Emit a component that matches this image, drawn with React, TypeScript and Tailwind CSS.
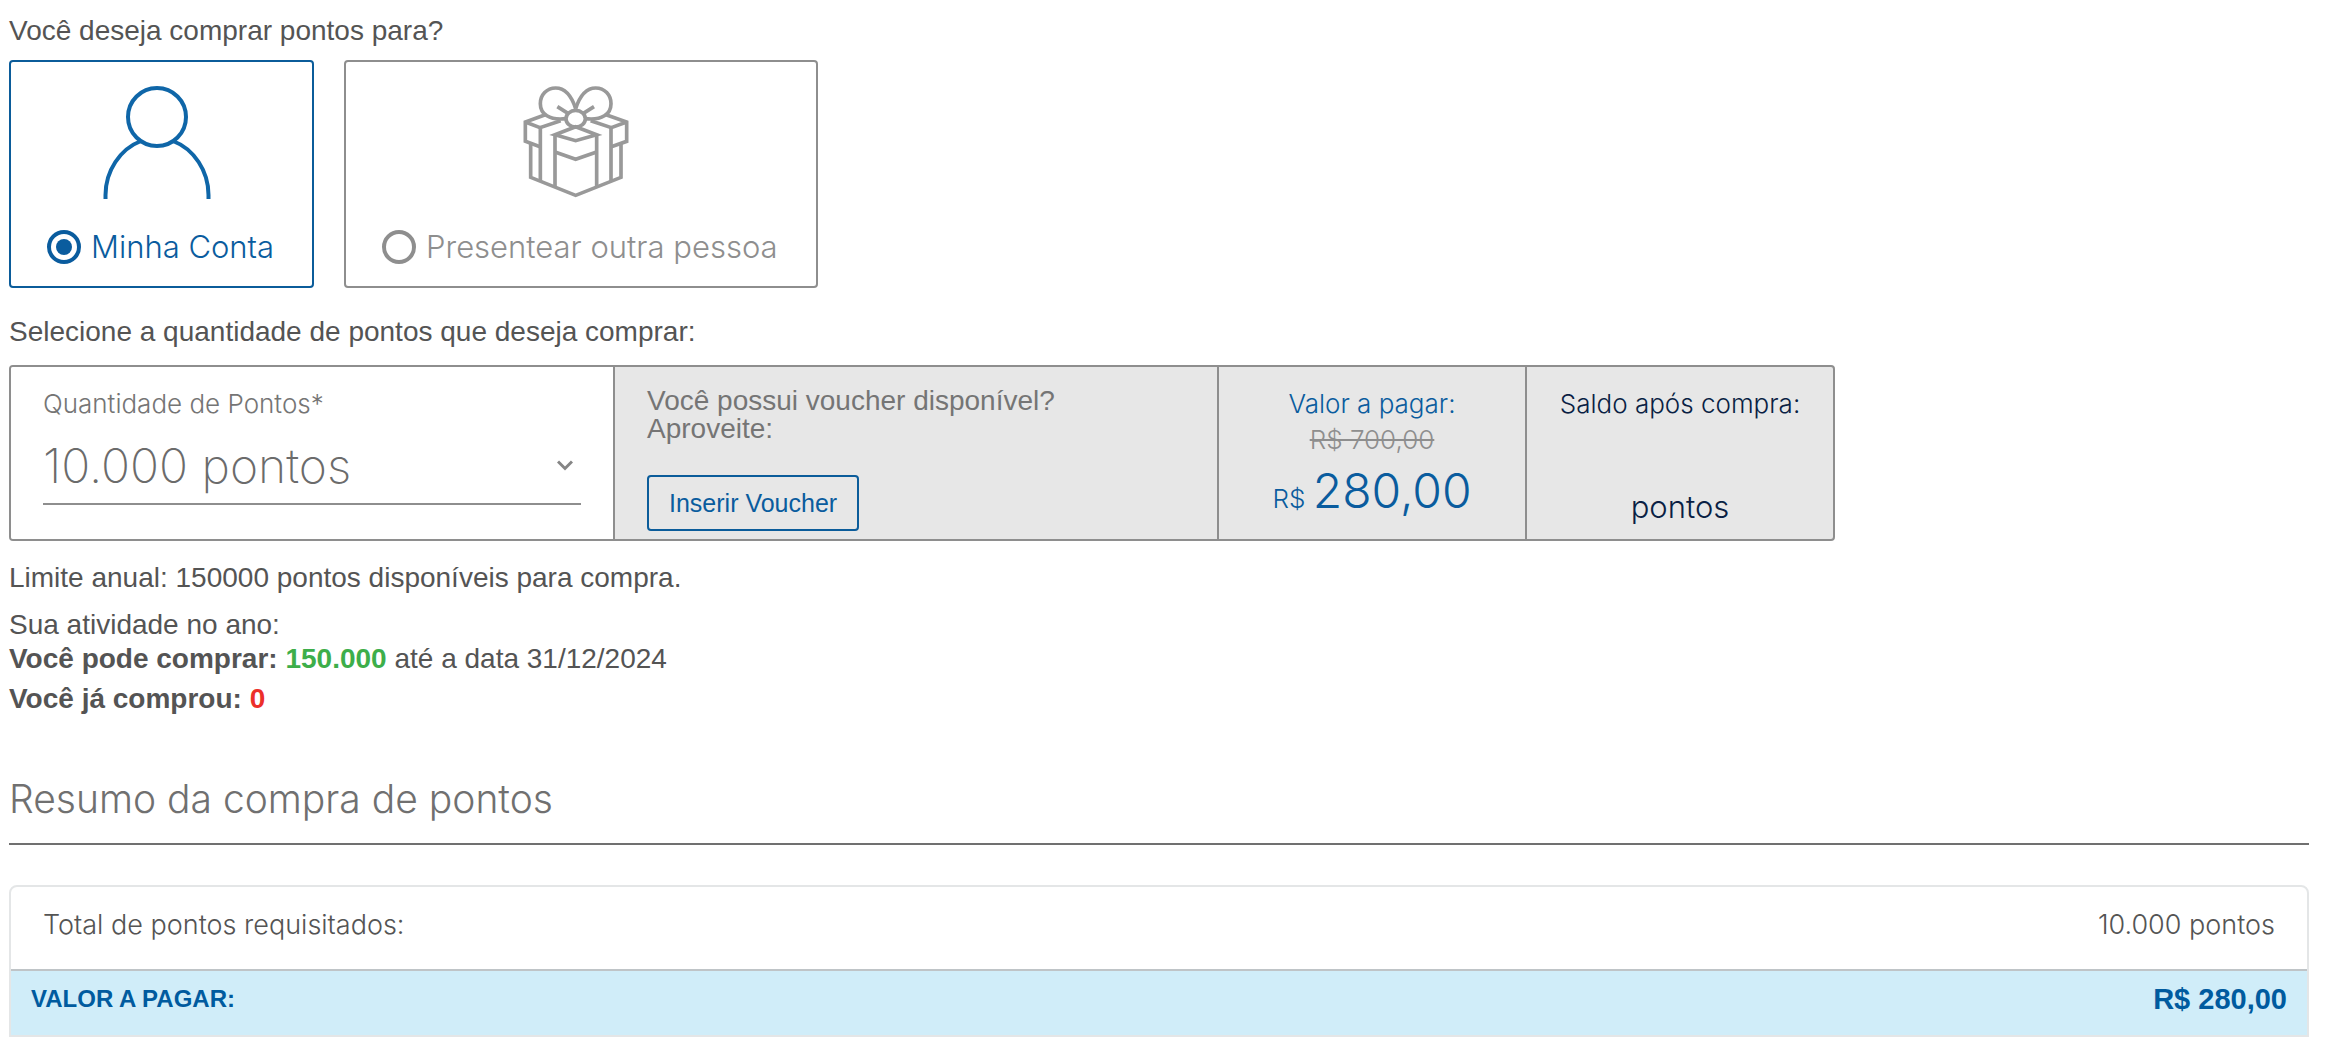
import React, { useState } from 'react';

type Recipient = 'self' | 'gift';

const PersonIcon = () => (
  <svg className="mr-2" width="108" height="114" viewBox="0 0 108 114" fill="none" stroke="#0f66a8" strokeWidth="4" aria-hidden="true">
    <circle cx="54" cy="31" r="29" />
    <path d="M2.500 113V109C2.500 85 17 63 38 55M105.500 113V109C105.500 85 91 63 70 55" />
  </svg>
);

const GiftIcon = () => (
  <svg className="mr-2" width="106" height="114" viewBox="0 0 316 342" fill="none" stroke="#999999" strokeWidth="11" aria-hidden="true">
    {/* Bow */}
    <path d="M157 68C144 28 124 6 97 6C70 6 51 27 51 53C51 84 78 104 128 98" />
    <path d="M157 68C170 28 190 6 217 6C244 6 263 27 263 53C263 84 236 104 186 98" />
    <path d="M102 62L134 82M212 62L180 82" />
    <ellipse cx="157" cy="98" rx="29" ry="25" />
    {/* Lid */}
    <path d="M66 86L6 108V166L50 182M6 108L50 125L112 104" />
    <path d="M248 86L310 108V166L264 182M310 108L264 125L202 104" />
    <path d="M95 146L157 122L220 146L157 164Z" />
    <path d="M95 198L157 220L220 198" />
    {/* Body */}
    <path d="M22 172V274L157 328L293 274V172" />
    <path d="M51 125V285M95 146V302M220 146V302M263 125V285" />
  </svg>
);

interface RecipientCardProps {
  label: string;
  checked: boolean;
  onSelect: () => void;
  icon: React.ReactNode;
}

const RecipientCard: React.FC<RecipientCardProps> = ({ label, checked, onSelect, icon }) => (
  <label
    className={`flex flex-col items-center gap-[27px] rounded border-2 pt-6 pr-[38px] pb-[19px] pl-9 cursor-pointer ${
      checked ? 'border-[#0b5c9a] text-[#0a5c9e]' : 'border-[#8e8e8e] text-[#8e8e8e]'
    }`}
  >
    {icon}
    <span className="flex items-center gap-2.5">
      <input
        type="radio"
        name="recipient"
        checked={checked}
        onChange={onSelect}
        className="size-[34px] shrink-0 appearance-none rounded-full border-4 border-current bg-white p-[5px] checked:bg-current checked:bg-clip-content"
      />
      <span className="font-['Inter',sans-serif] text-[31px] leading-10 font-light">{label}</span>
    </span>
  </label>
);

const amounts = ['10.000', '20.000', '30.000', '50.000'];

export default function App() {
  const [recipient, setRecipient] = useState<Recipient>('self');
  const [amount, setAmount] = useState(amounts[0]);

  return (
    <main className="bg-white pt-[11px] pr-[23px] pb-6 pl-[9px] font-['Liberation_Sans',Arial,sans-serif] text-[28px] leading-10 text-[#545454]">
      <fieldset>
        <legend>Você deseja comprar pontos para?</legend>
        <div className="mt-[9px] flex flex-wrap gap-[30px]">
          <RecipientCard
            label="Minha Conta"
            checked={recipient === 'self'}
            onSelect={() => setRecipient('self')}
            icon={<PersonIcon />}
          />
          <RecipientCard
            label="Presentear outra pessoa"
            checked={recipient === 'gift'}
            onSelect={() => setRecipient('gift')}
            icon={<GiftIcon />}
          />
        </div>
      </fieldset>

      <p className="mt-6">Selecione a quantidade de pontos que deseja comprar:</p>

      <section className="mt-[13px] grid w-full max-w-[1826px] grid-cols-[604fr_604fr_308fr_306fr] divide-x-2 divide-[#8e8e8e] overflow-hidden rounded border-2 border-[#8e8e8e] bg-[#e7e7e7]">
        <div className="bg-white px-8 pt-[17px]">
          <label htmlFor="amount" className="block font-['Inter',sans-serif] text-[26px] font-light text-[#757575]">
            Quantidade de Pontos*
          </label>
          <div className="relative">
            <select
              id="amount"
              value={amount}
              onChange={(e) => setAmount(e.target.value)}
              className="h-[81px] w-full appearance-none border-b-2 border-[#8e8e8e] bg-transparent pt-1 font-['Inter',sans-serif] text-[48px] leading-[64px] font-extralight text-[#6b6b6b] outline-none"
            >
              {amounts.map((value) => (
                <option key={value} value={value}>
                  {value} pontos
                </option>
              ))}
            </select>
            <svg
              className="pointer-events-none absolute top-9 right-2"
              width="16"
              height="11"
              viewBox="0 0 16 11"
              fill="none"
              stroke="#858585"
              strokeWidth="3"
              aria-hidden="true"
            >
              <path d="M1 1.500L8 8.500L15 1.500" />
            </svg>
          </div>
        </div>

        <div className="flex flex-col items-start px-8 pt-5 pb-2">
          <p className="leading-7 text-[#757575]">
            Você possui voucher disponível?
            <br />
            Aproveite:
          </p>
          <button
            type="button"
            className="mt-8 h-14 rounded border-2 border-[#0b5c9a] px-5 text-[25px] text-[#0a5c9e]"
          >
            Inserir Voucher
          </button>
        </div>

        <div className="pt-[17px] text-center font-['Inter',sans-serif] text-[26px] font-light text-[#0a5c9e]">
          <p>Valor a pagar:</p>
          <p className="leading-8 text-[#8e8e8e] line-through">R$ 700,00</p>
          <p className="leading-[70px]">
            R$ <strong className="text-[48px] font-light">280,00</strong>
          </p>
        </div>

        <div className="flex flex-col justify-between pt-[17px] pb-3 text-center font-['Inter',sans-serif] text-[26px] font-light text-[#0a1f44]">
          <p>Saldo após compra:</p>
          <p className="text-[31px]">pontos</p>
        </div>
      </section>

      <p className="mt-[17px]">Limite anual: 150000 pontos disponíveis para compra.</p>
      <div className="mt-2.5 leading-[34px]">
        <p>Sua atividade no ano:</p>
        <p>
          <b>
            Você pode comprar: <span className="text-[#3dae4a]">150.000</span>
          </b>{' '}
          até a data 31/12/2024
        </p>
        <p className="mt-1.5 font-bold">
          Você já comprou: <span className="text-[#ec2f2a]">0</span>
        </p>
      </div>

      <h2 className="mt-[59px] border-b-2 border-[#707070] pb-5 font-['Inter',sans-serif] text-[39px] leading-[48px] font-light text-[#707070]">
        Resumo da compra de pontos
      </h2>

      <table className="mt-10 w-full border-separate border-spacing-0 rounded-t-lg border-2 border-[#e4e6e7]">
        <tbody>
          <tr className="font-['Inter',sans-serif] text-[27px]">
            <th scope="row" className="border-b-2 border-[#bfc4c7] pt-[18px] pb-6 pl-8 text-left font-light">
              Total de pontos requisitados:
            </th>
            <td className="border-b-2 border-[#bfc4c7] pt-[18px] pr-8 pb-6 text-right font-light">
              {amount} pontos
            </td>
          </tr>
          <tr className="bg-[#d0edf9] font-bold text-[#005b9f]">
            <th scope="row" className="pt-2 pb-4 pl-5 text-left text-2xl leading-10">
              VALOR A PAGAR:
            </th>
            <td className="pt-2 pr-5 pb-4 text-right text-[29px]">R$ 280,00</td>
          </tr>
        </tbody>
      </table>
    </main>
  );
}
